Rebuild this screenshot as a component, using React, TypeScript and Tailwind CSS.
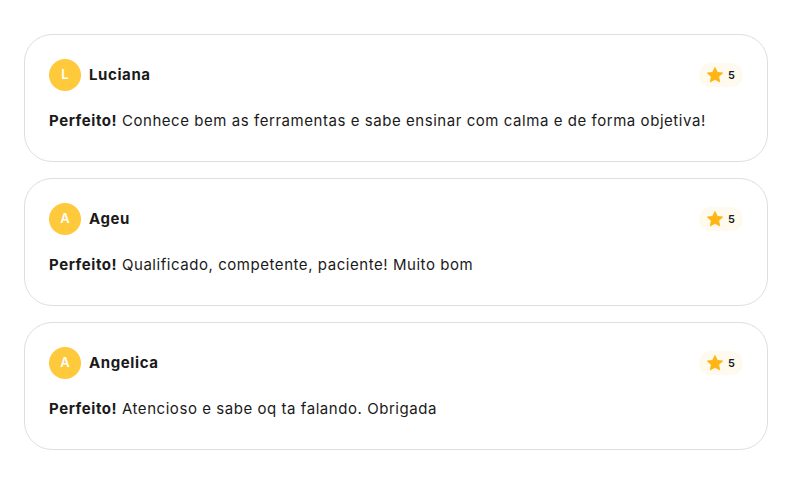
import React from "react";

const reviews = [
  { initial: "L", name: "Luciana", text: "Conhece bem as ferramentas e sabe ensinar com calma e de forma objetiva!" },
  { initial: "A", name: "Ageu", text: "Qualificado, competente, paciente! Muito bom" },
  { initial: "A", name: "Angelica", text: "Atencioso e sabe oq ta falando. Obrigada" },
];

function Star() {
  return (
    <svg width="18" height="18" viewBox="0 0 24 24" aria-hidden="true">
      <path
        d="M12 1.8l3.1 6.6 7.2.9-5.3 5 1.4 7.1L12 17.9l-6.4 3.5 1.4-7.1-5.3-5 7.2-.9z"
        fill="#fdb515"
        stroke="#fdb515"
        strokeWidth="1"
        strokeLinejoin="round"
      />
    </svg>
  );
}

export default function App() {
  return (
    <div
      className="w-[800px] h-[500px] bg-white pl-6 pt-[34px] flex flex-col gap-4"
      style={{ fontFamily: "Inter, 'Noto Sans', sans-serif" }}
    >
      {reviews.map((r, i) => (
        <div
          key={i}
          className="w-[744px] h-[128px] border border-[#dedede] rounded-[28px] px-6 pt-6 flex flex-col"
        >
          <div className="flex items-center justify-between">
            <div className="flex items-center gap-2">
              <div className="w-8 h-8 rounded-full bg-[#ffc93c] flex items-center justify-center text-white text-[13px] font-semibold">
                {r.initial}
              </div>
              <span className="text-[15px] font-bold text-[#1a1a1a] tracking-[0.6px]">{r.name}</span>
            </div>
            <div className="h-[24px] pl-[7px] pr-[8px] rounded-full bg-[#fffaee] flex items-center gap-[4px]">
              <Star />
              <span className="text-[11px] font-semibold text-[#1a1a1a]">5</span>
            </div>
          </div>
          <p className="mt-[20px] text-[15px] text-[#1a1a1a] leading-5 tracking-[0.55px]">
            <span className="font-bold">Perfeito!</span> {r.text}
          </p>
        </div>
      ))}
    </div>
  );
}
